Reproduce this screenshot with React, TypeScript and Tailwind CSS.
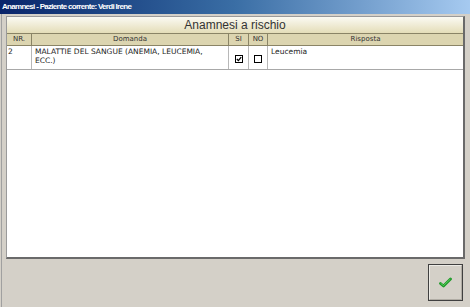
import React from "react";

const cell = "border-r border-[#b8b8b8]";

export default function App() {
  return (
    <div
      className="w-[470px] h-[307px] bg-[#d4d0c8] flex flex-col overflow-hidden"
      style={{ fontFamily: '"DejaVu Sans", Verdana, sans-serif' }}
    >
      <div className="h-[14px] shrink-0 bg-gradient-to-r from-[#0a246a] via-[#3a6ea5] to-[#a6caf0] flex items-center pl-[2px]">
        <span
          className="text-white font-bold text-[8px] leading-none tracking-[-0.7px]"
          style={{ fontFamily: '"Liberation Sans", Arial, sans-serif' }}
        >
          Anamnesi - Paziente corrente: Verdi Irene
        </span>
      </div>
      <div className="flex-1 flex flex-col border-l border-[#a0a0a0] ml-[1px] pl-[4px] pr-[5px] pt-[2px] pb-[6px]">
        <div className="h-[243px] bg-white border-t border-l border-[#9a9a9a] border-r-2 border-b-2 border-r-[#6a6a6a] border-b-[#6a6a6a] flex flex-col">
          <div
            className="h-[17px] shrink-0 bg-gradient-to-b from-[#fbfaf3] to-[#e4ddb8] border-b border-[#8a8466] flex items-center justify-center text-[12px] text-[#333] leading-none"
            style={{ fontFamily: '"Liberation Sans", Arial, sans-serif' }}
          >
            Anamnesi a rischio
          </div>
          <div className="h-[12px] shrink-0 bg-[#dcd5b0] border-b border-[#8a8466] grid grid-cols-[25px_197px_20px_19px_1fr] text-[7px] text-[#333] leading-none">
            <div className="border-r border-[#8a8466] flex items-center justify-center">NR.</div>
            <div className="border-r border-[#8a8466] flex items-center justify-center">Domanda</div>
            <div className="border-r border-[#8a8466] flex items-center justify-center">SI</div>
            <div className="border-r border-[#8a8466] flex items-center justify-center">NO</div>
            <div className="flex items-center justify-center">Risposta</div>
          </div>
          <div className="h-[24px] shrink-0 border-b border-[#a8a8a8] grid grid-cols-[25px_197px_20px_19px_1fr] text-[7.5px] text-[#222] leading-[9px]">
            <div className={`${cell} pl-[1px] pt-[1px]`}>2</div>
            <div className={`${cell} pl-[3px] pt-[1px] pr-[18px]`}>
              MALATTIE DEL SANGUE (ANEMIA, LEUCEMIA, ECC.)
            </div>
            <div className={`${cell} flex items-end justify-center pb-[6px]`}>
              <div className="w-[8px] h-[8px] border border-black bg-white flex items-center justify-center">
                <svg width="6" height="6" viewBox="0 0 6 6">
                  <path d="M0.8 3 L2.4 4.6 L5.2 1.2" stroke="#000" strokeWidth="1.3" fill="none" />
                </svg>
              </div>
            </div>
            <div className={`${cell} flex items-end justify-center pb-[6px]`}>
              <div className="w-[8px] h-[8px] border border-black bg-white" />
            </div>
            <div className="pl-[3px] pt-[1px]">Leucemia</div>
          </div>
        </div>
        <div className="flex justify-end mt-[5px] pr-[2px]">
          <div className="w-[35px] h-[37px] border border-[#404040] bg-[#d4d0c8] flex items-center justify-center">
            <div className="w-[33px] h-[35px] border border-t-[#ecebe6] border-l-[#ecebe6] border-r-[#b0aca4] border-b-[#b0aca4] flex items-center justify-center">
              <svg width="13" height="11" viewBox="0 0 13 11">
                <path d="M1.5 6.5 L4.5 9 L11.5 2" stroke="#1f9a2a" strokeWidth="2.8" fill="none" strokeLinecap="round" strokeLinejoin="round" />
                <path d="M2 6.6 L4.5 8.5 L11 2.4" stroke="#6ad86a" strokeWidth="0.8" fill="none" strokeLinecap="round" />
              </svg>
            </div>
          </div>
        </div>
      </div>
    </div>
  );
}
